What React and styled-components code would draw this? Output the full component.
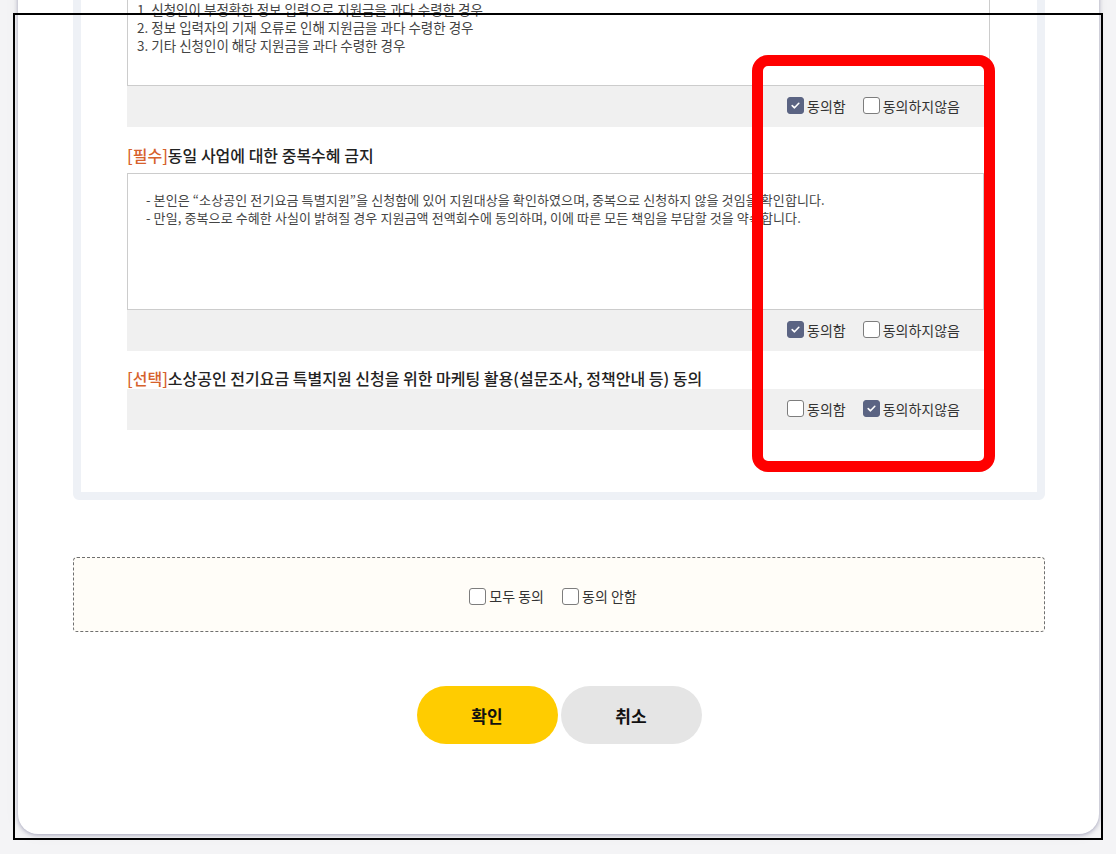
import React from 'react';
import styled, { createGlobalStyle } from 'styled-components';

const GlobalStyle = createGlobalStyle`
    html, body {
        margin: 0;
        padding: 0;
        background: #f4f4f6;
    }

    body {
        font-family: 'Noto Sans CJK KR', 'Noto Sans', sans-serif;
        color: #333;
    }
`;

const Screen = styled.div`
    position: relative;
    height: 854px;
    overflow: hidden;
`;

const Modal = styled.div`
    margin: -40px 17px 0 18px;
    padding: 2px 54px 90px 55px;
    background: #fff;
    border-radius: 0 0 20px 20px;
    box-shadow: 0 1px 4px rgba(70, 70, 120, 0.45), 0 0 16px rgba(0, 0, 0, 0.05);
`;

const Panel = styled.div`
    display: flex;
    flex-direction: column;
    padding: 19px 53px 62px 46px;
    border: 8px solid #eef1f6;
    border-radius: 6px;
`;

const TermsBox = styled.div`
    box-sizing: border-box;
    height: ${(props) => props.$height}px;
    margin-right: ${(props) => props.$overhang || 0}px;
    padding: ${(props) => props.$padding};
    border: 1px solid #ccc;
    font-size: ${(props) => props.$size || 13}px;
    letter-spacing: ${(props) => props.$spacing || 0}px;
    line-height: 18px;
    color: #444;

    p {
        margin: 0;
        white-space: nowrap;
    }
`;

const AgreeBar = styled.div`
    display: flex;
    justify-content: flex-end;
    align-items: center;
    gap: 17px;
    height: 41px;
    padding: 0 24px 2px 0;
    box-sizing: border-box;
    background: #f0f0f0;
`;

const Title = styled.h3`
    margin: ${(props) => props.$top || 17}px 0 ${(props) => props.$gap || 0}px;
    font-size: 16px;
    font-weight: 500;
    line-height: 22px;
    color: #222;
    white-space: nowrap;
`;

const Tag = styled.span`
    color: #d6622c;
`;

const Option = styled.label`
    display: flex;
    align-items: center;
    gap: 3px;
    font-size: 14px;
    line-height: 20px;
    color: #333;
    white-space: nowrap;
`;

const Box = styled.span`
    box-sizing: border-box;
    display: flex;
    align-items: center;
    justify-content: center;
    width: 17px;
    height: 17px;
    border-radius: 3px;
    border: 1px solid ${(props) => (props.$checked ? '#5b6483' : '#7d7d7d')};
    background: ${(props) => (props.$checked ? '#5b6483' : '#fff')};
`;

const AllAgree = styled.div`
    display: flex;
    justify-content: center;
    align-items: center;
    gap: 18px;
    height: 75px;
    margin-top: 57px;
    padding: 3px 12px 0 0;
    box-sizing: border-box;
    background: #fffdf8;
    border: 1px dashed #6f6f6f;
    border-radius: 4px;
`;

const Buttons = styled.div`
    display: flex;
    justify-content: center;
    gap: 3px;
    margin-top: 54px;
`;

const Button = styled.button`
    width: 141px;
    height: 58px;
    border: 0;
    border-radius: 29px;
    background: ${(props) => (props.$primary ? '#ffcc00' : '#e5e5e5')};
    font-family: 'Noto Sans CJK KR', 'Noto Sans', sans-serif;
    font-size: 17px;
    font-weight: 700;
    color: #111;
`;

const Frame = styled.div`
    position: absolute;
    left: 13px;
    top: 13px;
    width: 1090px;
    height: 827px;
    box-sizing: border-box;
    border: 2px solid #000;
    pointer-events: none;
`;

const Highlight = styled.div`
    position: absolute;
    left: 752px;
    top: 55px;
    width: 243px;
    height: 417px;
    box-sizing: border-box;
    border: 11px solid #ff0000;
    border-radius: 16px;
    pointer-events: none;
`;

const Check = ({ checked, children }) => (
    <Option>
        <Box $checked={checked}>
            {checked && (
                <svg width="11" height="11" viewBox="0 0 11 11">
                    <path
                        d="M2.2 5.6 L4.5 7.8 L8.8 3.3"
                        fill="none"
                        stroke="#fff"
                        strokeWidth="1.6"
                        strokeLinecap="round"
                        strokeLinejoin="round"
                    />
                </svg>
            )}
        </Box>
        {children}
    </Option>
);

const Choice = ({ agreed }) => (
    <AgreeBar>
        <Check checked={agreed}>동의함</Check>
        <Check checked={!agreed}>동의하지않음</Check>
    </AgreeBar>
);

const App = () => (
    <Screen>
        <GlobalStyle />
        <Modal>
            <Panel>
                <TermsBox $height={97} $overhang={-6} $padding="10px 9px" $size={13.5}>
                    <p>1. 신청인이 부정확한 정보 입력으로 지원금을 과다 수령한 경우</p>
                    <p>2. 정보 입력자의 기재 오류로 인해 지원금을 과다 수령한 경우</p>
                    <p>3. 기타 신청인이 해당 지원금을 과다 수령한 경우</p>
                </TermsBox>
                <Choice agreed />

                <Title $gap={7}>
                    <Tag>[필수]</Tag>동일 사업에 대한 중복수혜 금지
                </Title>
                <TermsBox $height={137} $padding="17px 18px" $spacing={0.1}>
                    <p>
                        - 본인은 “소상공인 전기요금 특별지원”을 신청함에 있어 지원대상을 확인하였으며, 중복으로
                        신청하지 않을 것임을 확인합니다.
                    </p>
                    <p>
                        - 만일, 중복으로 수혜한 사실이 밝혀질 경우 지원금액 전액회수에 동의하며, 이에 따른 모든
                        책임을 부담할 것을 약속합니다.
                    </p>
                </TermsBox>
                <Choice agreed />

                <Title $top={16}>
                    <Tag>[선택]</Tag>소상공인 전기요금 특별지원 신청을 위한 마케팅 활용(설문조사, 정책안내 등) 동의
                </Title>
                <Choice agreed={false} />
            </Panel>

            <AllAgree>
                <Check>모두 동의</Check>
                <Check>동의 안함</Check>
            </AllAgree>

            <Buttons>
                <Button $primary>확인</Button>
                <Button>취소</Button>
            </Buttons>
        </Modal>

        <Frame />
        <Highlight />
    </Screen>
);

export default App;
